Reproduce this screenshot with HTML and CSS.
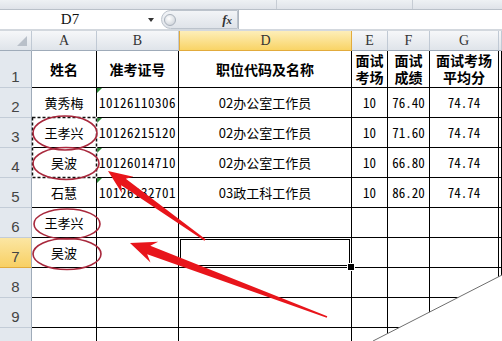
FILE: index.html
```html
<!DOCTYPE html>
<html lang="zh-CN">
<head>
<meta charset="UTF-8" />
<title>面试成绩表</title>
<link rel="stylesheet" href="styles.css">
</head>
<body>
<div class="ribbon-edge">
  <span class="p1"></span>
  <span class="p2"></span>
</div>

<div class="formula-bar">
  <div class="namebox">
    <span class="ref">D7</span>
    <span class="drop"></span>
  </div>
  <div class="fx-box">
    <span class="knob"></span>
    <span class="fx">f<span class="fx-x">x</span></span>
  </div>
  <div class="formula-input"></div>
</div>
<div class="bar-gap"></div>

<div class="sheet">
  <!-- column headers -->
  <div class="ch corner">
    <svg width="10" height="10" viewBox="0 0 10 10"><polygon points="10,0 10,10 0,10" fill="#b9c0c9"/></svg>
  </div>
  <div class="ch">A</div>
  <div class="ch">B</div>
  <div class="ch hot">D</div>
  <div class="ch">E</div>
  <div class="ch">F</div>
  <div class="ch">G</div>
  <div class="ch"></div>

  <!-- row 1 -->
  <div class="rh">1</div>
  <div class="c hd">姓名</div>
  <div class="c hd">准考证号</div>
  <div class="c hd">职位代码及名称</div>
  <div class="c hd">面试<br>考场</div>
  <div class="c hd">面试<br>成绩</div>
  <div class="c hd">面试考场<br>平均分</div>
  <div class="c"></div>

  <!-- row 2 -->
  <div class="rh">2</div>
  <div class="c">黄秀梅</div>
  <div class="c num id flag">10126110306</div>
  <div class="c">02办公室工作员</div>
  <div class="c num">10</div>
  <div class="c num">76.40</div>
  <div class="c num">74.74</div>
  <div class="c"></div>

  <!-- row 3 -->
  <div class="rh">3</div>
  <div class="c">王孝兴</div>
  <div class="c num id flag">10126215120</div>
  <div class="c">02办公室工作员</div>
  <div class="c num">10</div>
  <div class="c num">71.60</div>
  <div class="c num">74.74</div>
  <div class="c"></div>

  <!-- row 4 -->
  <div class="rh">4</div>
  <div class="c">吴波</div>
  <div class="c num id flag">10126014710</div>
  <div class="c">02办公室工作员</div>
  <div class="c num">10</div>
  <div class="c num">66.80</div>
  <div class="c num">74.74</div>
  <div class="c"></div>

  <!-- row 5 -->
  <div class="rh">5</div>
  <div class="c">石慧</div>
  <div class="c num id flag">10126132701</div>
  <div class="c">03政工科工作员</div>
  <div class="c num">10</div>
  <div class="c num">86.20</div>
  <div class="c num">74.74</div>
  <div class="c"></div>

  <!-- row 6 -->
  <div class="rh">6</div>
  <div class="c">王孝兴</div>
  <div class="c"></div>
  <div class="c"></div>
  <div class="c"></div>
  <div class="c"></div>
  <div class="c"></div>
  <div class="c"></div>

  <!-- row 7 -->
  <div class="rh hot">7</div>
  <div class="c">吴波</div>
  <div class="c"></div>
  <div class="c sel"></div>
  <div class="c"></div>
  <div class="c"></div>
  <div class="c"></div>
  <div class="c"></div>

  <!-- row 8 -->
  <div class="rh">8</div>
  <div class="c"></div>
  <div class="c"></div>
  <div class="c"></div>
  <div class="c"></div>
  <div class="c"></div>
  <div class="c"></div>
  <div class="c"></div>

  <!-- row 9 -->
  <div class="rh">9</div>
  <div class="c"></div>
  <div class="c"></div>
  <div class="c"></div>
  <div class="c"></div>
  <div class="c"></div>
  <div class="c"></div>
  <div class="c"></div>

  <!-- row 10, only its top shows -->
  <div class="rh"></div>
  <div class="c"></div>
  <div class="c"></div>
  <div class="c"></div>
  <div class="c"></div>
  <div class="c"></div>
  <div class="c"></div>
  <div class="c"></div>
</div>

<!-- annotations drawn over the sheet -->
<svg class="marks" width="502" height="341" viewBox="0 0 502 341">
  <rect x="32.5" y="117.5" width="64" height="60" fill="none" stroke="#fff" stroke-width="1.5"/>
  <rect x="32.5" y="117.5" width="64" height="60" fill="none" stroke="#111" stroke-width="1.5" stroke-dasharray="3 2"/>
  <g fill="none" stroke="#a8283c" stroke-width="1.6">
    <ellipse cx="65" cy="133" rx="32" ry="17"/>
    <ellipse cx="66" cy="163.5" rx="33" ry="16"/>
    <ellipse cx="67" cy="224" rx="33" ry="15"/>
    <ellipse cx="67" cy="254" rx="34" ry="15.5"/>
  </g>
  <g fill="#e8151b">
    <polygon points="108,171 133.4,176.8 125.8,178.8 205.6,239.2 204.4,240.8 121.2,185.3 121.8,193.1"/>
    <polygon points="130,243 158.2,241.8 150.3,245.8 327.3,316.3 326.7,317.8 147.2,254.2 150.5,262.4"/>
  </g>
  <polygon points="502,275 373,341 502,341" fill="#fff"/>
  <line x1="502" y1="275" x2="373" y2="341" stroke="#6e6e6e" stroke-width="1"/>
</svg>
</body>
</html>
```

FILE: styles.css
```css
* {
  box-sizing: border-box;
}
body {
  margin: 0;
  width: 502px;
  height: 341px;
  overflow: hidden;
  position: relative;
  background: #fff;
  color: #000;
  font-family: "Noto Sans CJK SC", sans-serif;
}

/* top strip + formula bar */
.ribbon-edge {
  height: 10px;
  display: flex;
  background: linear-gradient(#eef1f4, #dfe3e9);
  border-bottom: 1px solid #b9c0c9;
}
.ribbon-edge span {
  border-right: 1px solid #c6ccd4;
}
.ribbon-edge .p1 {
  width: 277px;
}
.ribbon-edge .p2 {
  width: 136px;
}
.formula-bar {
  height: 19px;
  display: flex;
  background: #fff;
}
.namebox {
  width: 161px;
  display: flex;
  align-items: center;
  font-family: "Liberation Serif", serif;
  font-size: 15px;
  color: #111;
}
.namebox .ref {
  width: 140px;
  text-align: center;
}
.namebox .drop {
  width: 0;
  height: 0;
  margin-left: 8px;
  border-left: 3px solid transparent;
  border-right: 3px solid transparent;
  border-top: 4px solid #333;
}
.fx-box {
  width: 77px;
  display: flex;
  align-items: center;
  justify-content: space-between;
  padding: 0 5px 0 2px;
  background: linear-gradient(#f2f4f7, #dfe3e9);
  border: 1px solid #bcc3cc;
  border-radius: 10px 0 0 10px;
}
.knob {
  width: 12px;
  height: 12px;
  border-radius: 50%;
  background: radial-gradient(circle at 40% 35%, #fff, #c5cbd3);
  border: 1px solid #a9b1bb;
}
.fx {
  font-family: "Liberation Serif", serif;
  font-style: italic;
  font-weight: bold;
  font-size: 13px;
  color: #333;
}
.fx-x {
  font-size: 11px;
}
.formula-input {
  flex: 1;
  border-left: 1px solid #aeb6c0;
}
.bar-gap {
  height: 2px;
  background: #d3d8de;
}

/* sheet */
.sheet {
  display: grid;
  grid-template-columns: 32px 65px 82px 173px 36px 42px 69px 1fr;
  grid-template-rows: 20px 37px repeat(9, 30px);
}
.ch {
  display: flex;
  align-items: center;
  justify-content: center;
  background: linear-gradient(#f6f7f9, #dfe4ea);
  border-right: 1px solid #c0c9d4;
  border-bottom: 1px solid #9fabb9;
  font-family: "Liberation Serif", serif;
  font-size: 14px;
  color: #333;
}
.ch.corner {
  justify-content: flex-end;
  align-items: flex-end;
  padding: 0 4px 4px 0;
}
.ch.hot {
  background: linear-gradient(#fdeeb9, #f9d466);
  border-left: 1px solid #e2ab3c;
  border-right-color: #e2ab3c;
  border-bottom-color: #e2ab3c;
}
.rh {
  display: flex;
  align-items: flex-end;
  justify-content: center;
  padding-bottom: 2px;
  background: #e3e8ee;
  border-right: 1px solid #9fabb9;
  border-bottom: 1px solid #c3ccd7;
  font-family: "Liberation Sans", sans-serif;
  font-size: 15px;
  line-height: 16px;
  color: #444;
}
.rh.hot {
  background: linear-gradient(#fbe6a3, #f8d064);
  border-bottom-color: #e2ab3c;
}
.c {
  position: relative;
  display: flex;
  align-items: center;
  justify-content: center;
  text-align: center;
  border-right: 1px solid #000;
  border-bottom: 1px solid #000;
  font-size: 13px;
  line-height: 16px;
}
.hd {
  font-weight: bold;
  font-size: 14px;
  line-height: 17px;
}
.num {
  font-size: 13px;
  font-feature-settings: "hwid" 1;
}
.num.id {
  letter-spacing: 0.5px;
}
.flag::before {
  content: "";
  position: absolute;
  top: 0;
  left: 0;
  border-top: 5px solid #2f8a3a;
  border-right: 5px solid transparent;
}
.sel {
  box-shadow: inset 0 0 0 1px #fff, inset 0 0 0 2px #000;
}
.sel::after {
  content: "";
  position: absolute;
  right: -4px;
  bottom: -4px;
  width: 6px;
  height: 6px;
  background: #000;
  border: 1px solid #fff;
  z-index: 2;
}

/* annotations */
.marks {
  position: absolute;
  top: 0;
  left: 0;
  pointer-events: none;
}
```
